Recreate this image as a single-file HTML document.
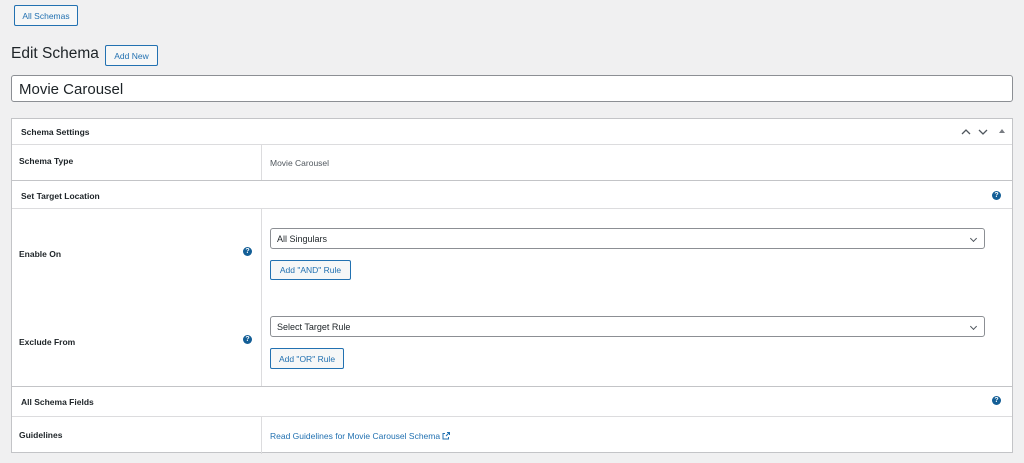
<!DOCTYPE html>
<html><head><style>
*{box-sizing:border-box;margin:0;padding:0}
body{width:1024px;height:463px;background:#f0f0f1;font-family:"Liberation Sans",sans-serif;font-size:9px;color:#1d2327;position:relative;overflow:hidden}
.abs{position:absolute}
.btn{position:absolute;border:1px solid #2271b1;border-radius:2px;background:#f6f7f7;color:#2271b1;font-size:8.5px;display:flex;align-items:center;justify-content:center}
.box{position:absolute;left:11px;top:118px;width:1002px;height:335px;background:#fff;border:1px solid #c3c4c7}
.hl{position:absolute;left:0;width:1000px;height:1px;background:#dcdcde}
.b{font-weight:bold;font-size:8.5px;position:absolute}
.sel{position:absolute;left:258px;width:715px;height:21px;border:1px solid #8c8f94;border-radius:3px;font-size:9px;padding-left:6px;display:flex;align-items:center}
.q{position:absolute;width:9px;height:9px;border-radius:50%;background:#135e96;color:#fff;font-size:7px;font-weight:bold;text-align:center;line-height:9px}
.chev{position:absolute;right:8px;top:7px;width:5px;height:5px;border-right:1px solid #50575e;border-bottom:1px solid #50575e;transform:rotate(45deg)}
</style></head><body>
<div class="btn" style="left:14px;top:5px;width:64px;height:21px">All Schemas</div>
<div class="abs" style="left:11px;top:45px;font-size:15.5px">Edit Schema</div>
<div class="btn" style="left:105px;top:45px;width:53px;height:21px">Add New</div>
<div class="abs" style="left:11px;top:75px;width:1002px;height:27px;background:#fff;border:1px solid #8c8f94;border-radius:3px;font-size:15px;padding:5px 7px">Movie Carousel</div>
<div class="box">
 <div class="b" style="left:9px;top:8px">Schema Settings</div>
 <svg class="abs" style="left:948px;top:7px" width="50" height="12"><path d="M2 8l4-4 4 4M19 4l4 4 4-4" stroke="#50575e" stroke-width="1.3" fill="none"/><path d="M39 7l3-4 3 4z" fill="#787c82"/></svg>
 <div class="hl" style="top:25px"></div>
 <div class="b" style="left:7px;top:37px">Schema Type</div>
 <div class="abs" style="left:258px;top:39px;font-size:8.5px;color:#50575e">Movie Carousel</div>
 <div class="hl" style="top:61px;background:#c3c4c7"></div>
 <div class="b" style="left:9px;top:72px">Set Target Location</div>
 <div class="q" style="left:980px;top:72px">?</div>
 <div class="hl" style="top:89px"></div>
 <div class="b" style="left:7px;top:130px">Enable On</div>
 <div class="q" style="left:231px;top:128px">?</div>
 <div class="sel" style="top:109px">All Singulars<div class="chev"></div></div>
 <div class="btn" style="left:258px;top:141px;width:81px;height:20px">Add "AND" Rule</div>
 <div class="b" style="left:7px;top:218px">Exclude From</div>
 <div class="q" style="left:231px;top:216px">?</div>
 <div class="sel" style="top:197px">Select Target Rule<div class="chev"></div></div>
 <div class="btn" style="left:258px;top:229px;width:74px;height:21px">Add "OR" Rule</div>
 <div class="hl" style="top:267px;background:#c3c4c7"></div>
 <div class="b" style="left:9px;top:278px">All Schema Fields</div>
 <div class="q" style="left:980px;top:277px">?</div>
 <div class="hl" style="top:297px"></div>
 <div class="b" style="left:7px;top:311px">Guidelines</div>
 <div class="abs" style="left:258px;top:312px;font-size:8.5px;color:#2271b1">Read Guidelines for Movie Carousel Schema <svg width="8" height="8" style="vertical-align:-1px"><path d="M3 1.5H1v5.5h5.5V5M4 4l3.5-3.5M5 .5h2.5V3" stroke="#2271b1" stroke-width="1" fill="none"/></svg></div>
 <div class="abs" style="left:249px;top:26px;width:1px;height:35px;background:#dcdcde"></div>
 <div class="abs" style="left:249px;top:90px;width:1px;height:177px;background:#dcdcde"></div>
 <div class="abs" style="left:249px;top:298px;width:1px;height:37px;background:#dcdcde"></div>
</div>
</body></html>
